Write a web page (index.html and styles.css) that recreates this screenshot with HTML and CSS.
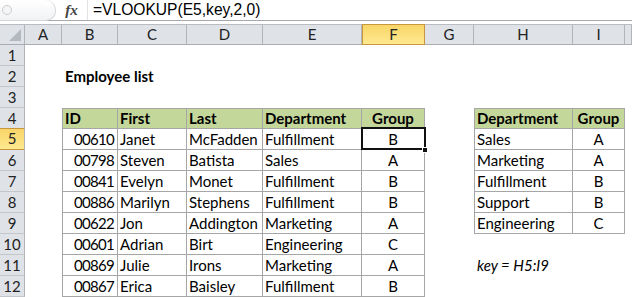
FILE: index.html
```html
<!DOCTYPE html>
<html>
<head>
<meta charset="utf-8">
<link rel="stylesheet" href="styles.css">
</head>
<body>
<div class="fbar">
  <div class="namebox"><span class="knob"></span></div>
  <div class="fx">fx</div>
  <div class="formula">=VLOOKUP(E5,key,2,0)</div>
</div>
<div class="sheet">
  <div class="row colhdr">
    <div class="corner"><span class="tri"></span></div>
    <div class="ch">A</div><div class="ch">B</div><div class="ch">C</div><div class="ch">D</div><div class="ch">E</div><div class="ch sel">F</div><div class="ch">G</div><div class="ch">H</div><div class="ch">I</div><div class="ch"></div>
  </div>
  <div class="row"><div class="rh">1</div><div></div><div></div><div></div><div></div><div></div><div></div><div></div><div></div><div></div><div></div></div>
  <div class="row"><div class="rh">2</div><div></div><div class="c title">Employee list</div><div></div><div></div><div></div><div></div><div></div><div></div><div></div><div></div></div>
  <div class="row"><div class="rh">3</div><div></div><div></div><div></div><div></div><div></div><div></div><div></div><div></div><div></div><div></div></div>
  <div class="row"><div class="rh">4</div><div></div>
    <div class="c t hd top first">ID</div><div class="c t hd top">First</div><div class="c t hd top">Last</div><div class="c t hd top">Department</div><div class="c t hd top ctr">Group</div>
    <div></div>
    <div class="c t hd top first">Department</div><div class="c t hd top ctr">Group</div><div></div></div>
  <div class="row"><div class="rh sel">5</div><div></div>
    <div class="c t first num">00610</div><div class="c t">Janet</div><div class="c t">McFadden</div><div class="c t">Fulfillment</div><div class="c t ctr active">B<span class="handle"></span></div>
    <div></div>
    <div class="c t first">Sales</div><div class="c t ctr">A</div><div></div></div>
  <div class="row"><div class="rh">6</div><div></div>
    <div class="c t first num">00798</div><div class="c t">Steven</div><div class="c t">Batista</div><div class="c t">Sales</div><div class="c t ctr">A</div>
    <div></div>
    <div class="c t first">Marketing</div><div class="c t ctr">A</div><div></div></div>
  <div class="row"><div class="rh">7</div><div></div>
    <div class="c t first num">00841</div><div class="c t">Evelyn</div><div class="c t">Monet</div><div class="c t">Fulfillment</div><div class="c t ctr">B</div>
    <div></div>
    <div class="c t first">Fulfillment</div><div class="c t ctr">B</div><div></div></div>
  <div class="row"><div class="rh">8</div><div></div>
    <div class="c t first num">00886</div><div class="c t">Marilyn</div><div class="c t">Stephens</div><div class="c t">Fulfillment</div><div class="c t ctr">B</div>
    <div></div>
    <div class="c t first">Support</div><div class="c t ctr">B</div><div></div></div>
  <div class="row"><div class="rh">9</div><div></div>
    <div class="c t first num">00622</div><div class="c t">Jon</div><div class="c t">Addington</div><div class="c t">Marketing</div><div class="c t ctr">A</div>
    <div></div>
    <div class="c t first">Engineering</div><div class="c t ctr">C</div><div></div></div>
  <div class="row"><div class="rh">10</div><div></div>
    <div class="c t first num">00601</div><div class="c t">Adrian</div><div class="c t">Birt</div><div class="c t">Engineering</div><div class="c t ctr">C</div>
    <div></div><div></div><div></div><div></div></div>
  <div class="row"><div class="rh">11</div><div></div>
    <div class="c t first num">00869</div><div class="c t">Julie</div><div class="c t">Irons</div><div class="c t">Marketing</div><div class="c t ctr">A</div>
    <div></div>
    <div class="c key">key = H5:I9</div><div></div><div></div></div>
  <div class="row"><div class="rh">12</div><div></div>
    <div class="c t first num">00867</div><div class="c t">Erica</div><div class="c t">Baisley</div><div class="c t">Fulfillment</div><div class="c t ctr">B</div>
    <div></div><div></div><div></div><div></div></div>
</div>
</body>
</html>
```

FILE: styles.css
```css
* { box-sizing: border-box; }
html, body { margin: 0; padding: 0; background: #fff; }
body { width: 632px; height: 297px; overflow: hidden; font-family: Lato, "Open Sans", sans-serif; font-size: 15px; color: #000; }

.fbar {
  height: 21px;
  display: flex;
  align-items: center;
  border-bottom: 1px solid #a5a8ad;
  position: relative;
}
.namebox {
  width: 56px;
  height: 21px;
  border: 1px solid #d4d6da;
  border-left: none;
  border-top: none;
  border-radius: 0 10px 10px 0;
  background: linear-gradient(#ffffff, #f1f2f4);
  display: flex;
  align-items: center;
  padding-left: 2px;
}
.knob {
  width: 10px;
  height: 10px;
  border-radius: 50%;
  border: 1px solid #c9ccd1;
  background: #f4f5f7;
}
.fx {
  width: 31px;
  text-align: center;
  font-family: "Liberation Serif", serif;
  font-style: italic;
  font-weight: bold;
  font-size: 15px;
  color: #444;
  padding-left: 0;
}
.formula {
  font-family: "Liberation Sans", Arial, sans-serif;
  font-size: 15.6px;
  padding-left: 5px;
  color: #000;
  border-left: 1px solid #e2e3e6;
  height: 20px;
  line-height: 20px;
}

.sheet { margin-top: 3px; }
.row {
  display: grid;
  grid-template-columns: 25px 37px 56px 69px 76px 99px 63px 49px 99px 52px 7px;
  height: 21px;
}
.row > div { min-width: 0; white-space: nowrap; overflow: visible; }

.colhdr { background: #dfe3e8; border-top: 1px solid #b9bdc2; border-bottom: 1px solid #a9adb2; height: 21px; }
.corner { border-right: 1px solid #b1b5ba; position: relative; }
.tri {
  position: absolute; right: 3px; bottom: 3px;
  width: 0; height: 0;
  border-left: 12px solid transparent;
  border-bottom: 12px solid #b4b9bf;
}
.ch {
  border-right: 1px solid #b1b5ba;
  text-align: center;
  font-size: 15px;
  line-height: 19px;
  color: #222;
}
.ch.sel {
  background: linear-gradient(#f8d568, #ffe98f);
  border: 1px solid #c8963e;
  margin-top: -1px;
  margin-bottom: -1px;
}
.rh {
  background: #dfe3e8;
  border-right: 1px solid #b1b5ba;
  border-bottom: 1px solid #c3c7cc;
  text-align: center;
  line-height: 20px;
  color: #222;
}
.rh.sel {
  background: linear-gradient(#f8d568, #ffe98f);
  border-bottom: 1px solid #c8963e;
  border-top: 1px solid #c8963e;
  margin-top: -1px;
  line-height: 19px;
  height: 22px;
}

.c { line-height: 20px; padding: 0 2px; }
.title { font-weight: bold; padding-left: 3px; }
.t { border-right: 1px solid #a6a6a6; border-bottom: 1px solid #a6a6a6; }
.t.top { border-top: 1px solid #a6a6a6; line-height: 19px; }
.t.first { border-left: 1px solid #a6a6a6; }
.hd { background: #c4d79b; font-weight: bold; }
.num { text-align: right; padding-right: 3px; letter-spacing: -0.7px; }
.ctr { text-align: center; }
.key { font-style: italic; padding-left: 3px; }

.active { position: relative; }
.active::before {
  content: "";
  position: absolute;
  left: -1px; top: -2px; right: -2px; bottom: -1px;
  border: 2px solid #111;
}
.handle {
  position: absolute;
  right: -4px; bottom: -4px;
  width: 6px; height: 6px;
  background: #111;
  border: 1px solid #fff;
}
```
